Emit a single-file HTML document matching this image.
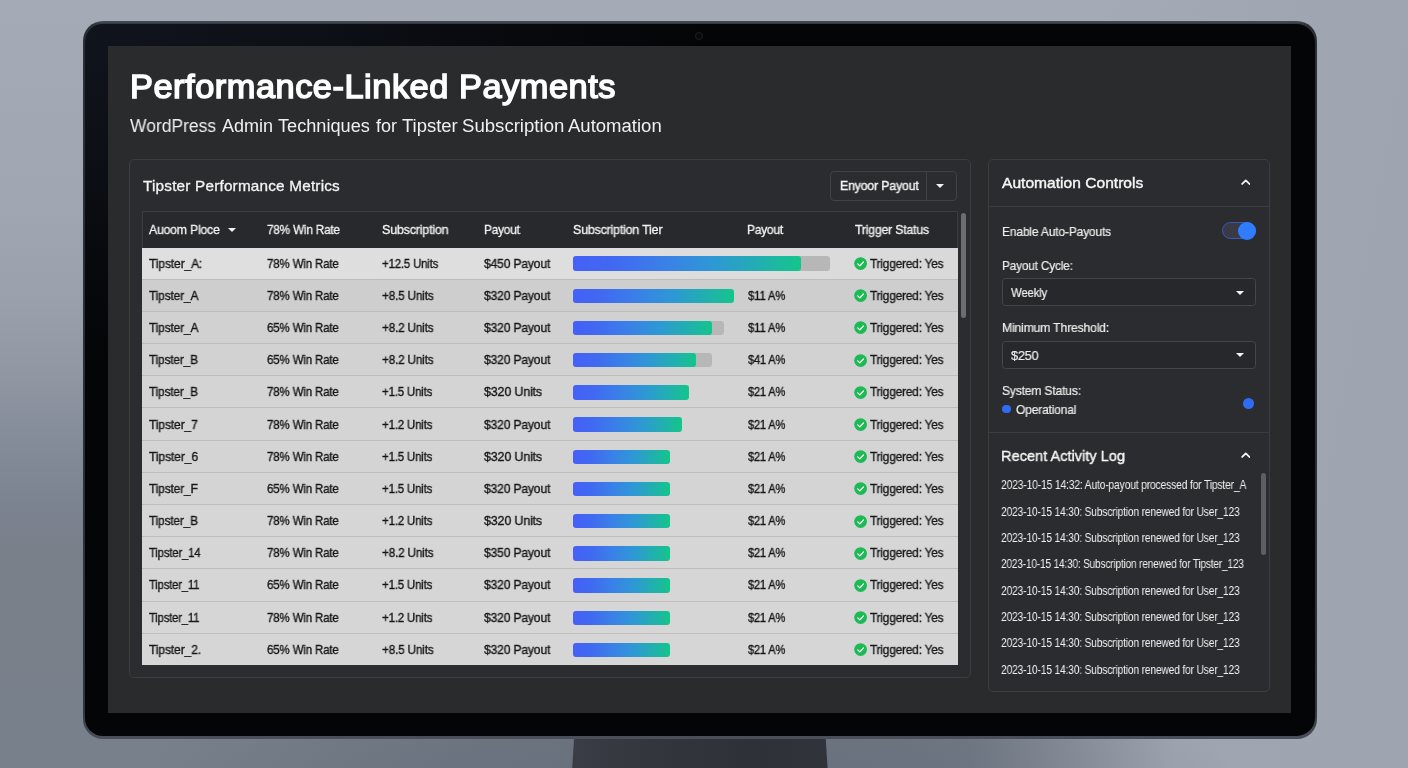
<!DOCTYPE html>
<html lang="en">
<head>
<meta charset="utf-8">
<title>Performance-Linked Payments</title>
<style>
*{margin:0;padding:0;box-sizing:border-box}
html,body{width:1408px;height:768px;overflow:hidden}
body{position:relative;font-family:"Liberation Sans",sans-serif;color:#f2f2f2;
 background:
  radial-gradient(ellipse 560px 170px at 690px 800px, rgba(70,76,90,.34) 0%, rgba(70,76,90,.24) 50%, rgba(70,76,90,0) 100%),
  linear-gradient(100deg, rgba(160,166,177,0) 0%, rgba(160,166,177,0) 71.5%, rgba(160,166,177,.5) 78%, rgba(160,166,177,1) 84.5%, rgba(159,165,176,1) 100%),
  linear-gradient(to bottom,#a4abb6 0%,#a0a7b2 26%,#9aa1ac 39%,#8f96a2 50%,#878e9b 55.5%,#818895 61%,#7c8390 66%,#798089 73%,#78808c 100%);
}
.abs{position:absolute}
/* monitor */
.stand{position:absolute;left:560px;top:730px;width:290px;height:38px}
.monitor{position:absolute;left:82.5px;top:20.6px;width:1234.5px;height:718.1px;border-radius:20px;
 background:linear-gradient(to bottom,#4a4f59 0,#363a42 2.5px,#2b2f36 5px,#2a2e35 60%,#31353d 96%,#4b505a 100%)}
.monitor i{position:absolute;left:2px;right:1.6px;top:3.2px;bottom:2.4px;border-radius:18px 18.4px 18.4px 18px;
 background:radial-gradient(ellipse 620px 340px at 0 0,#10141c 0%,#0d1017 35%,#07090d 70%,#040507 100%)}
.cam{position:absolute;left:695.2px;top:32.3px;width:8px;height:8px;border-radius:50%;border:1.3px solid #1d1e22;background:#08090b}
.screen{position:absolute;left:107.5px;top:45.7px;width:1183.7px;height:667.8px;background:#2a2b2d}
/* text helper */
.txt{position:absolute;left:0;top:0;width:1408px;height:768px}
.t{position:absolute;left:0;top:0;white-space:nowrap;line-height:1;transform-origin:0 0;will-change:transform}
.h1{font-size:32.8px;font-weight:400;color:#fff;-webkit-text-stroke-width:1.5px;letter-spacing:.5px}
.sub{font-size:18px;color:#f0f0f0}
/* panels */
.panel{position:absolute;border:1px solid #3c3d41;border-radius:5px;background:#2b2c2f}
.p1{left:129.3px;top:159.2px;width:841.6px;height:518.8px}
.p2{left:988.2px;top:159.2px;width:281.8px;height:533px}
.ptitle{font-size:15px;color:#f4f4f4;-webkit-text-stroke-width:.3px;letter-spacing:.2px}
.btn{position:absolute;left:830.1px;top:170.9px;width:127.1px;height:30.1px;border:1px solid #414246;border-radius:4px}
.btn .dv{position:absolute;left:95.4px;top:0;width:1px;height:100%;background:#414246}
.bt{font-size:12.6px;color:#f4f4f4;letter-spacing:-.15px;-webkit-text-stroke-width:.4px}
.caret{position:absolute;width:0;height:0;border-left:4.3px solid transparent;border-right:4.3px solid transparent;border-top:4.8px solid #f2f2f2}
/* table */
.thead{position:absolute;left:142.1px;top:211.4px;width:815.9px;height:36.5px;border:1px solid #3c3d41;border-bottom:none;background:#28292c}
.th{font-size:12.6px;color:#f3f3f3;letter-spacing:-.2px;-webkit-text-stroke-width:.3px}
.tbl{position:absolute;left:142.2px;top:247.5px;width:815.7px;height:417.4px;background:#d4d4d4;overflow:hidden}
.row{position:absolute;left:0;width:100%;height:32.2px;border-bottom:1px solid #bdbdbd;background:#d4d4d4}
.row.r1{background:linear-gradient(to right,#dfdfdf 0%,#dedede 60%,#d9d9d9 100%)}
.row.r2{background:#cecece}
.row.r3{background:#d1d1d1}
.row.r4{background:#d2d2d2}
.row.r9,.row.r10,.row.r11,.row.r12,.row.r13{background:#d6d6d6}
.c{font-size:12.6px;color:#161616;letter-spacing:-.2px;-webkit-text-stroke-width:.35px}
.bar,.trk{position:absolute;left:431px;top:8.9px;height:14.5px;border-radius:3px}
.bar{background:linear-gradient(to right,#4560f6 0%,#4169f2 18%,#3a80e8 40%,#2e98d4 62%,#22afb0 82%,#14c58a 100%)}
.trk{background:#b7b7b7}
.chk{position:absolute;left:711.6px;top:9.5px;width:13.2px;height:13.2px}
.sb{position:absolute;border-radius:3px;background:#6c6d71}
/* right panel */
.hd{font-size:15.2px;color:#f6f6f6;-webkit-text-stroke-width:.4px}
.lbl{font-size:12.8px;color:#eeeeee;letter-spacing:-.2px;-webkit-text-stroke-width:.2px}
.divl{position:absolute;left:989px;width:280.4px;height:1px;background:#3b3c40}
.sel{position:absolute;left:1001.8px;width:254.3px;height:27.9px;border:1px solid #45464a;border-radius:3.5px;background:#27282b}
.sel .caret{left:233px;top:11.6px;border-left-width:4.1px;border-right-width:4.1px;border-top-width:4.6px}
.chev{position:absolute;width:9.6px;height:6.1px}
.toggle{position:absolute;left:1222.2px;top:222.1px;width:33.4px;height:17.4px;border-radius:9px;border:1.5px solid #3759bd;background:#3a3a46}
.knob{position:absolute;left:1237.7px;top:221.6px;width:18.3px;height:18.3px;border-radius:50%;background:#2f7cff}
.dot{position:absolute;border-radius:50%;background:#2f6cf6}
.log{font-size:12.6px;color:#f0f0f0;letter-spacing:-.25px}

</style>
</head>
<body>
<svg class="stand" viewBox="0 0 290 38"><defs><linearGradient id="sg" x1="0" y1="0" x2="1" y2="0"><stop offset="0" stop-color="#3a3d45"/><stop offset=".3" stop-color="#33363d"/><stop offset=".7" stop-color="#2e3137"/><stop offset="1" stop-color="#303339"/></linearGradient></defs><polygon points="14.6,0 265.2,0 267.6,38 12.2,38" fill="url(#sg)"/></svg>
<div class="monitor"><i></i></div>
<div class="cam"></div>
<div class="screen"></div>
<div class="panel p1"></div>
<div class="btn"><i class="dv"></i><i class="caret" style="left:105.2px;top:12.5px;border-left-width:4.4px;border-right-width:4.4px;border-top-width:4.9px"></i></div>
<div class="thead"><i class="caret" style="left:84.6px;top:15.2px;border-left-width:4.1px;border-right-width:4.1px;border-top-width:4.6px"></i></div>
<div class="sb" style="left:961px;top:213px;width:5px;height:105px"></div>
<div class="tbl">
<div class="row r1" style="top:0.00px"><i class="trk" style="width:256.8px"></i><i class="bar" style="width:228.2px"></i><svg class="chk" viewBox="0 0 14 14"><circle cx="7" cy="7" r="6.8" fill="#1db954"/><path d="M4 7.3 L6.2 9.4 L10.1 5.2" fill="none" stroke="#fff" stroke-width="1.35" stroke-linecap="round" stroke-linejoin="round"/></svg></div>
<div class="row r2" style="top:32.20px"><i class="bar" style="width:160.5px"></i><svg class="chk" viewBox="0 0 14 14"><circle cx="7" cy="7" r="6.8" fill="#1db954"/><path d="M4 7.3 L6.2 9.4 L10.1 5.2" fill="none" stroke="#fff" stroke-width="1.35" stroke-linecap="round" stroke-linejoin="round"/></svg></div>
<div class="row r3" style="top:64.40px"><i class="trk" style="width:150.8px"></i><i class="bar" style="width:138.7px"></i><svg class="chk" viewBox="0 0 14 14"><circle cx="7" cy="7" r="6.8" fill="#1db954"/><path d="M4 7.3 L6.2 9.4 L10.1 5.2" fill="none" stroke="#fff" stroke-width="1.35" stroke-linecap="round" stroke-linejoin="round"/></svg></div>
<div class="row r4" style="top:96.60px"><i class="trk" style="width:138.8px"></i><i class="bar" style="width:122.8px"></i><svg class="chk" viewBox="0 0 14 14"><circle cx="7" cy="7" r="6.8" fill="#1db954"/><path d="M4 7.3 L6.2 9.4 L10.1 5.2" fill="none" stroke="#fff" stroke-width="1.35" stroke-linecap="round" stroke-linejoin="round"/></svg></div>
<div class="row r5" style="top:128.80px"><i class="bar" style="width:115.8px"></i><svg class="chk" viewBox="0 0 14 14"><circle cx="7" cy="7" r="6.8" fill="#1db954"/><path d="M4 7.3 L6.2 9.4 L10.1 5.2" fill="none" stroke="#fff" stroke-width="1.35" stroke-linecap="round" stroke-linejoin="round"/></svg></div>
<div class="row r6" style="top:161.00px"><i class="bar" style="width:108.8px"></i><svg class="chk" viewBox="0 0 14 14"><circle cx="7" cy="7" r="6.8" fill="#1db954"/><path d="M4 7.3 L6.2 9.4 L10.1 5.2" fill="none" stroke="#fff" stroke-width="1.35" stroke-linecap="round" stroke-linejoin="round"/></svg></div>
<div class="row r7" style="top:193.20px"><i class="bar" style="width:96.5px"></i><svg class="chk" viewBox="0 0 14 14"><circle cx="7" cy="7" r="6.8" fill="#1db954"/><path d="M4 7.3 L6.2 9.4 L10.1 5.2" fill="none" stroke="#fff" stroke-width="1.35" stroke-linecap="round" stroke-linejoin="round"/></svg></div>
<div class="row r8" style="top:225.40px"><i class="bar" style="width:96.5px"></i><svg class="chk" viewBox="0 0 14 14"><circle cx="7" cy="7" r="6.8" fill="#1db954"/><path d="M4 7.3 L6.2 9.4 L10.1 5.2" fill="none" stroke="#fff" stroke-width="1.35" stroke-linecap="round" stroke-linejoin="round"/></svg></div>
<div class="row r9" style="top:257.60px"><i class="bar" style="width:96.5px"></i><svg class="chk" viewBox="0 0 14 14"><circle cx="7" cy="7" r="6.8" fill="#1db954"/><path d="M4 7.3 L6.2 9.4 L10.1 5.2" fill="none" stroke="#fff" stroke-width="1.35" stroke-linecap="round" stroke-linejoin="round"/></svg></div>
<div class="row r10" style="top:289.80px"><i class="bar" style="width:96.5px"></i><svg class="chk" viewBox="0 0 14 14"><circle cx="7" cy="7" r="6.8" fill="#1db954"/><path d="M4 7.3 L6.2 9.4 L10.1 5.2" fill="none" stroke="#fff" stroke-width="1.35" stroke-linecap="round" stroke-linejoin="round"/></svg></div>
<div class="row r11" style="top:322.00px"><i class="bar" style="width:96.5px"></i><svg class="chk" viewBox="0 0 14 14"><circle cx="7" cy="7" r="6.8" fill="#1db954"/><path d="M4 7.3 L6.2 9.4 L10.1 5.2" fill="none" stroke="#fff" stroke-width="1.35" stroke-linecap="round" stroke-linejoin="round"/></svg></div>
<div class="row r12" style="top:354.20px"><i class="bar" style="width:96.5px"></i><svg class="chk" viewBox="0 0 14 14"><circle cx="7" cy="7" r="6.8" fill="#1db954"/><path d="M4 7.3 L6.2 9.4 L10.1 5.2" fill="none" stroke="#fff" stroke-width="1.35" stroke-linecap="round" stroke-linejoin="round"/></svg></div>
<div class="row r13" style="top:386.40px"><i class="bar" style="width:96.5px"></i><svg class="chk" viewBox="0 0 14 14"><circle cx="7" cy="7" r="6.8" fill="#1db954"/><path d="M4 7.3 L6.2 9.4 L10.1 5.2" fill="none" stroke="#fff" stroke-width="1.35" stroke-linecap="round" stroke-linejoin="round"/></svg></div>
</div>
<div class="panel p2"></div>
<svg class="chev" style="left:1240.9px;top:179.3px" viewBox="0 0 10 6.4"><path d="M1.2 5.2 L5 1.5 L8.8 5.2" fill="none" stroke="#f4f4f4" stroke-width="1.9" stroke-linecap="round" stroke-linejoin="round"/></svg>
<div class="divl" style="top:205.6px"></div>
<div class="toggle"></div><div class="knob"></div>
<div class="sel" style="top:278.1px"><i class="caret"></i></div>
<div class="sel" style="top:340.7px"><i class="caret"></i></div>
<div class="dot" style="left:1002.1px;top:404.7px;width:8.8px;height:8.8px"></div>
<div class="dot" style="left:1242.5px;top:398px;width:11.3px;height:11.3px"></div>
<div class="divl" style="top:432px"></div>
<svg class="chev" style="left:1240.9px;top:452px" viewBox="0 0 10 6.4"><path d="M1.2 5.2 L5 1.5 L8.8 5.2" fill="none" stroke="#f4f4f4" stroke-width="1.9" stroke-linecap="round" stroke-linejoin="round"/></svg>
<div class="sb" style="left:1261px;top:473px;width:5px;height:82px;background:#5d5e62"></div>
<div class="txt">
<span id="h1" class="t h1" style="transform:translate(130px,71px) scaleX(1.0479)">Performance-Linked Payments</span>
<span id="sub0" class="t sub" style="transform:translate(130px,117px) scaleX(0.9693)">WordPress</span>
<span id="sub1" class="t sub" style="transform:translate(222px,117px) scaleX(1.0000)">Admin</span>
<span id="sub2" class="t sub" style="transform:translate(278px,117px) scaleX(1.0088)">Techniques</span>
<span id="sub3" class="t sub" style="transform:translate(376px,117px) scaleX(0.9952)">for</span>
<span id="sub4" class="t sub" style="transform:translate(402px,117px) scaleX(1.0259)">Tipster</span>
<span id="sub5" class="t sub" style="transform:translate(462px,117px) scaleX(1.0330)">Subscription</span>
<span id="sub6" class="t sub" style="transform:translate(568px,117px) scaleX(1.0289)">Automation</span>
<span id="ptitle" class="t ptitle" style="transform:translate(143px,178px) scaleX(1.0192)">Tipster Performance Metrics</span>
<span id="bt" class="t bt" style="transform:translate(840px,180px) scaleX(0.9753)">Enyoor Payout</span>
<span id="th1" class="t th" style="transform:translate(149px,224px) scaleX(0.9712)">Auoom Ploce</span>
<span id="th2" class="t th" style="transform:translate(267px,224px) scaleX(0.9321)">78% Win Rate</span>
<span id="th3" class="t th" style="transform:translate(382px,224px) scaleX(0.9925)">Subscription</span>
<span id="th4" class="t th" style="transform:translate(484px,224px) scaleX(0.9385)">Payout</span>
<span id="th5" class="t th" style="transform:translate(573px,224px) scaleX(0.9879)">Subscription Tier</span>
<span id="th6" class="t th" style="transform:translate(747px,224px) scaleX(0.9462)">Payout</span>
<span id="th7" class="t th" style="transform:translate(855px,224px) scaleX(0.9750)">Trigger Status</span>
<span id="hd1" class="t hd" style="transform:translate(1002px,175px) scaleX(1.0268)">Automation Controls</span>
<span id="l1" class="t lbl" style="transform:translate(1002px,226px) scaleX(0.9414)">Enable Auto-Payouts</span>
<span id="l2" class="t lbl" style="transform:translate(1002px,260px) scaleX(0.9263)">Payout Cycle:</span>
<span id="s1" class="t lbl" style="transform:translate(1011px,287px) scaleX(0.8902)">Weekly</span>
<span id="l3" class="t lbl" style="transform:translate(1002px,322px) scaleX(0.9545)">Minimum Threshold:</span>
<span id="s2" class="t lbl" style="transform:translate(1011px,350px) scaleX(0.9893)">$250</span>
<span id="l4" class="t lbl" style="transform:translate(1002px,385px) scaleX(0.9470)">System Status:</span>
<span id="l5" class="t lbl" style="transform:translate(1016px,404px) scaleX(0.9406)">Operational</span>
<span id="hd2" class="t hd" style="transform:translate(1001px,448px) scaleX(0.9602)">Recent Activity Log</span>
<span id="lg0" class="t log" style="transform:translate(1001px,479px) scaleX(0.8259)">2023-10-15 14:32: Auto-payout processed for Tipster_A</span>
<span id="lg1" class="t log" style="transform:translate(1001px,506px) scaleX(0.8196)">2023-10-15 14:30: Subscription renewed for User_123</span>
<span id="lg2" class="t log" style="transform:translate(1001px,532px) scaleX(0.8196)">2023-10-15 14:30: Subscription renewed for User_123</span>
<span id="lg3" class="t log" style="transform:translate(1001px,558px) scaleX(0.8050)">2023-10-15 14:30: Subscription renewed for Tipster_123</span>
<span id="lg4" class="t log" style="transform:translate(1001px,585px) scaleX(0.8196)">2023-10-15 14:30: Subscription renewed for User_123</span>
<span id="lg5" class="t log" style="transform:translate(1001px,611px) scaleX(0.8196)">2023-10-15 14:30: Subscription renewed for User_123</span>
<span id="lg6" class="t log" style="transform:translate(1001px,637px) scaleX(0.8196)">2023-10-15 14:30: Subscription renewed for User_123</span>
<span id="lg7" class="t log" style="transform:translate(1001px,664px) scaleX(0.8196)">2023-10-15 14:30: Subscription renewed for User_123</span>
<span id="r1c1" class="t c c1" style="transform:translate(149px,258px) scaleX(0.9685)">Tipster_A:</span>
<span id="r1c2" class="t c c2" style="transform:translate(267px,258px) scaleX(0.9167)">78% Win Rate</span>
<span id="r1c3" class="t c c3" style="transform:translate(382px,258px) scaleX(0.9081)">+12.5 Units</span>
<span id="r1c4" class="t c c4" style="transform:translate(484px,258px) scaleX(0.9638)">$450 Payout</span>
<span id="r1c7" class="t c c7" style="transform:translate(870px,258px) scaleX(0.9423)">Triggered: Yes</span>
<span id="r2c1" class="t c c1" style="transform:translate(149px,290px) scaleX(0.9538)">Tipster_A</span>
<span id="r2c2" class="t c c2" style="transform:translate(267px,290px) scaleX(0.9167)">78% Win Rate</span>
<span id="r2c3" class="t c c3" style="transform:translate(382px,290px) scaleX(0.9345)">+8.5 Units</span>
<span id="r2c4" class="t c c4" style="transform:translate(484px,290px) scaleX(0.9652)">$320 Payout</span>
<span id="r2c6" class="t c c6" style="transform:translate(748px,290px) scaleX(0.9024)">$11 A%</span>
<span id="r2c7" class="t c c7" style="transform:translate(870px,290px) scaleX(0.9423)">Triggered: Yes</span>
<span id="r3c1" class="t c c1" style="transform:translate(149px,322px) scaleX(0.9538)">Tipster_A</span>
<span id="r3c2" class="t c c2" style="transform:translate(267px,322px) scaleX(0.9167)">65% Win Rate</span>
<span id="r3c3" class="t c c3" style="transform:translate(382px,322px) scaleX(0.9327)">+8.2 Units</span>
<span id="r3c4" class="t c c4" style="transform:translate(484px,322px) scaleX(0.9652)">$320 Payout</span>
<span id="r3c6" class="t c c6" style="transform:translate(748px,322px) scaleX(0.9024)">$11 A%</span>
<span id="r3c7" class="t c c7" style="transform:translate(870px,322px) scaleX(0.9423)">Triggered: Yes</span>
<span id="r4c1" class="t c c1" style="transform:translate(149px,354px) scaleX(0.9462)">Tipster_B</span>
<span id="r4c2" class="t c c2" style="transform:translate(267px,354px) scaleX(0.9167)">65% Win Rate</span>
<span id="r4c3" class="t c c3" style="transform:translate(382px,354px) scaleX(0.9327)">+8.2 Units</span>
<span id="r4c4" class="t c c4" style="transform:translate(484px,354px) scaleX(0.9652)">$320 Payout</span>
<span id="r4c6" class="t c c6" style="transform:translate(748px,354px) scaleX(0.8814)">$41 A%</span>
<span id="r4c7" class="t c c7" style="transform:translate(870px,354px) scaleX(0.9423)">Triggered: Yes</span>
<span id="r5c1" class="t c c1" style="transform:translate(149px,386px) scaleX(0.9462)">Tipster_B</span>
<span id="r5c2" class="t c c2" style="transform:translate(267px,386px) scaleX(0.9167)">78% Win Rate</span>
<span id="r5c3" class="t c c3" style="transform:translate(382px,386px) scaleX(0.9109)">+1.5 Units</span>
<span id="r5c4" class="t c c4" style="transform:translate(484px,386px) scaleX(0.9948)">$320 Units</span>
<span id="r5c6" class="t c c6" style="transform:translate(748px,386px) scaleX(0.8814)">$21 A%</span>
<span id="r5c7" class="t c c7" style="transform:translate(870px,386px) scaleX(0.9423)">Triggered: Yes</span>
<span id="r6c1" class="t c c1" style="transform:translate(149px,419px) scaleX(0.9680)">Tipster_7</span>
<span id="r6c2" class="t c c2" style="transform:translate(267px,419px) scaleX(0.9167)">78% Win Rate</span>
<span id="r6c3" class="t c c3" style="transform:translate(382px,419px) scaleX(0.9127)">+1.2 Units</span>
<span id="r6c4" class="t c c4" style="transform:translate(484px,419px) scaleX(0.9652)">$320 Payout</span>
<span id="r6c6" class="t c c6" style="transform:translate(748px,419px) scaleX(0.8814)">$21 A%</span>
<span id="r6c7" class="t c c7" style="transform:translate(870px,419px) scaleX(0.9423)">Triggered: Yes</span>
<span id="r7c1" class="t c c1" style="transform:translate(149px,451px) scaleX(0.9740)">Tipster_6</span>
<span id="r7c2" class="t c c2" style="transform:translate(267px,451px) scaleX(0.9167)">78% Win Rate</span>
<span id="r7c3" class="t c c3" style="transform:translate(382px,451px) scaleX(0.9109)">+1.5 Units</span>
<span id="r7c4" class="t c c4" style="transform:translate(484px,451px) scaleX(0.9948)">$320 Units</span>
<span id="r7c6" class="t c c6" style="transform:translate(748px,451px) scaleX(0.8814)">$21 A%</span>
<span id="r7c7" class="t c c7" style="transform:translate(870px,451px) scaleX(0.9423)">Triggered: Yes</span>
<span id="r8c1" class="t c c1" style="transform:translate(149px,483px) scaleX(0.9549)">Tipster_F</span>
<span id="r8c2" class="t c c2" style="transform:translate(267px,483px) scaleX(0.9167)">65% Win Rate</span>
<span id="r8c3" class="t c c3" style="transform:translate(382px,483px) scaleX(0.9109)">+1.5 Units</span>
<span id="r8c4" class="t c c4" style="transform:translate(484px,483px) scaleX(0.9652)">$320 Payout</span>
<span id="r8c6" class="t c c6" style="transform:translate(748px,483px) scaleX(0.8814)">$21 A%</span>
<span id="r8c7" class="t c c7" style="transform:translate(870px,483px) scaleX(0.9423)">Triggered: Yes</span>
<span id="r9c1" class="t c c1" style="transform:translate(149px,515px) scaleX(0.9462)">Tipster_B</span>
<span id="r9c2" class="t c c2" style="transform:translate(267px,515px) scaleX(0.9167)">78% Win Rate</span>
<span id="r9c3" class="t c c3" style="transform:translate(382px,515px) scaleX(0.9127)">+1.2 Units</span>
<span id="r9c4" class="t c c4" style="transform:translate(484px,515px) scaleX(0.9948)">$320 Units</span>
<span id="r9c6" class="t c c6" style="transform:translate(748px,515px) scaleX(0.8814)">$21 A%</span>
<span id="r9c7" class="t c c7" style="transform:translate(870px,515px) scaleX(0.9423)">Triggered: Yes</span>
<span id="r10c1" class="t c c1" style="transform:translate(149px,547px) scaleX(0.9018)">Tipster_14</span>
<span id="r10c2" class="t c c2" style="transform:translate(267px,547px) scaleX(0.9167)">78% Win Rate</span>
<span id="r10c3" class="t c c3" style="transform:translate(382px,547px) scaleX(0.9327)">+8.2 Units</span>
<span id="r10c4" class="t c c4" style="transform:translate(484px,547px) scaleX(0.9652)">$350 Payout</span>
<span id="r10c6" class="t c c6" style="transform:translate(748px,547px) scaleX(0.8814)">$21 A%</span>
<span id="r10c7" class="t c c7" style="transform:translate(870px,547px) scaleX(0.9423)">Triggered: Yes</span>
<span id="r11c1" class="t c c1" style="transform:translate(149px,579px) scaleX(0.8964)">Tipster_11</span>
<span id="r11c2" class="t c c2" style="transform:translate(267px,579px) scaleX(0.9167)">65% Win Rate</span>
<span id="r11c3" class="t c c3" style="transform:translate(382px,579px) scaleX(0.9109)">+1.5 Units</span>
<span id="r11c4" class="t c c4" style="transform:translate(484px,579px) scaleX(0.9652)">$320 Payout</span>
<span id="r11c6" class="t c c6" style="transform:translate(748px,579px) scaleX(0.8814)">$21 A%</span>
<span id="r11c7" class="t c c7" style="transform:translate(870px,579px) scaleX(0.9423)">Triggered: Yes</span>
<span id="r12c1" class="t c c1" style="transform:translate(149px,612px) scaleX(0.8964)">Tipster_11</span>
<span id="r12c2" class="t c c2" style="transform:translate(267px,612px) scaleX(0.9167)">78% Win Rate</span>
<span id="r12c3" class="t c c3" style="transform:translate(382px,612px) scaleX(0.9127)">+1.2 Units</span>
<span id="r12c4" class="t c c4" style="transform:translate(484px,612px) scaleX(0.9652)">$320 Payout</span>
<span id="r12c6" class="t c c6" style="transform:translate(748px,612px) scaleX(0.8814)">$21 A%</span>
<span id="r12c7" class="t c c7" style="transform:translate(870px,612px) scaleX(0.9423)">Triggered: Yes</span>
<span id="r13c1" class="t c c1" style="transform:translate(149px,644px) scaleX(0.9698)">Tipster_2.</span>
<span id="r13c2" class="t c c2" style="transform:translate(267px,644px) scaleX(0.9167)">65% Win Rate</span>
<span id="r13c3" class="t c c3" style="transform:translate(382px,644px) scaleX(0.9345)">+8.5 Units</span>
<span id="r13c4" class="t c c4" style="transform:translate(484px,644px) scaleX(0.9652)">$320 Payout</span>
<span id="r13c6" class="t c c6" style="transform:translate(748px,644px) scaleX(0.8814)">$21 A%</span>
<span id="r13c7" class="t c c7" style="transform:translate(870px,644px) scaleX(0.9423)">Triggered: Yes</span>
</div>
</body>
</html>
